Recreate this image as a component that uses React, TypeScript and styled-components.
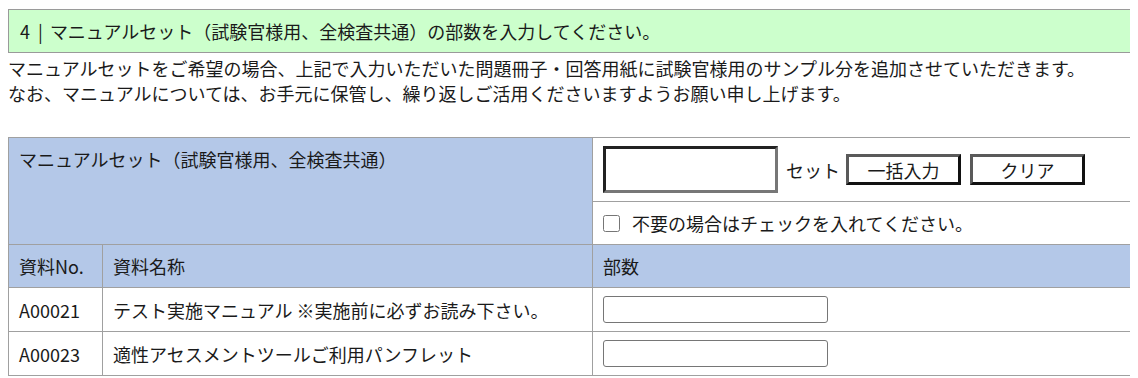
import React from "react";
import styled, { createGlobalStyle } from "styled-components";

const GlobalStyle = createGlobalStyle`
  body {
    margin: 8px;
    background: #ffffff;
    color: #1a1a1a;
    font-family: "Noto Sans CJK JP", "Noto Sans", sans-serif;
    font-size: 18px;
  }
`;

const Wrapper = styled.div`
  width: 1125px;
`;

const SectionTitle = styled.h2`
  margin: 1px 0 0;
  padding: 10px 11px;
  background: #ccffcc;
  border: 1px solid #9a9a9a;
  font-size: 18px;
  font-weight: 400;
  line-height: 22px;
`;

const Sep = styled.span`
  margin: 0 7px 0 8px;
`;

const Lead = styled.p`
  margin: 3px 0 0;
  line-height: 25px;
`;

const Table = styled.table`
  margin-top: 31px;
  width: 1125px;
  border-collapse: collapse;
  table-layout: fixed;
`;

const Cell = styled.td<{ $head?: boolean; $top?: boolean }>`
  border: 1px solid #a0a0a0;
  padding: 8px 10px;
  line-height: 26px;
  font-weight: 400;
  text-align: left;
  vertical-align: ${(p) => (p.$top ? "top" : "middle")};
  background: ${(p) => (p.$head ? "#b4c8e8" : "#ffffff")};
`;

const SetRow = styled.div`
  display: flex;
  align-items: center;
`;

const SetInput = styled.input`
  box-sizing: border-box;
  width: 175px;
  height: 47px;
  margin: 0;
  border-style: solid;
  border-width: 3px;
  border-color: #222222 #777777 #777777 #222222;
  background: #ffffff;
  outline: none;
`;

const Unit = styled.span`
  margin: 0 6px 0 8px;
`;

const PlainButton = styled.button`
  box-sizing: border-box;
  width: 115px;
  height: 31px;
  margin: 0 9px 0 0;
  padding: 0;
  border-style: solid;
  border-width: 3px;
  border-color: #5a5a5a #111111 #111111 #5a5a5a;
  background: #ffffff;
  color: #1a1a1a;
  font-family: inherit;
  font-size: 18px;
  line-height: 24px;
`;

const CheckLabel = styled.label`
  display: flex;
  align-items: center;
`;

const CheckBox = styled.input`
  width: 17px;
  height: 17px;
  margin: 0 12px 0 0;
`;

const CountInput = styled.input`
  display: block;
  box-sizing: border-box;
  width: 225px;
  height: 27px;
  margin: 0;
  border: 1px solid #767676;
  border-radius: 3px;
  background: #ffffff;
`;

const materials = [
  { no: "A00021", name: "テスト実施マニュアル ※実施前に必ずお読み下さい。" },
  { no: "A00023", name: "適性アセスメントツールご利用パンフレット" },
];

export default function App() {
  return (
    <Wrapper>
      <GlobalStyle />
      <SectionTitle>
        4<Sep>|</Sep>マニュアルセット（試験官様用、全検査共通）の部数を入力してください。
      </SectionTitle>
      <Lead>
        マニュアルセットをご希望の場合、上記で入力いただいた問題冊子・回答用紙に試験官様用のサンプル分を追加させていただきます。
        <br />
        なお、マニュアルについては、お手元に保管し、繰り返しご活用くださいますようお願い申し上げます。
      </Lead>
      <Table>
        <colgroup>
          <col style={{ width: 94 }} />
          <col style={{ width: 490 }} />
          <col style={{ width: 541 }} />
        </colgroup>
        <tbody>
          <tr>
            <Cell as="th" $head $top colSpan={2} rowSpan={2}>
              マニュアルセット（試験官様用、全検査共通）
            </Cell>
            <Cell>
              <SetRow>
                <SetInput type="text" />
                <Unit>セット</Unit>
                <PlainButton type="button">一括入力</PlainButton>
                <PlainButton type="button">クリア</PlainButton>
              </SetRow>
            </Cell>
          </tr>
          <tr>
            <Cell>
              <CheckLabel>
                <CheckBox type="checkbox" />
                不要の場合はチェックを入れてください。
              </CheckLabel>
            </Cell>
          </tr>
          <tr>
            <Cell as="th" $head>資料No.</Cell>
            <Cell as="th" $head>資料名称</Cell>
            <Cell as="th" $head>部数</Cell>
          </tr>
          {materials.map((m) => (
            <tr key={m.no}>
              <Cell>{m.no}</Cell>
              <Cell>{m.name}</Cell>
              <Cell>
                <CountInput type="text" />
              </Cell>
            </tr>
          ))}
        </tbody>
      </Table>
    </Wrapper>
  );
}
